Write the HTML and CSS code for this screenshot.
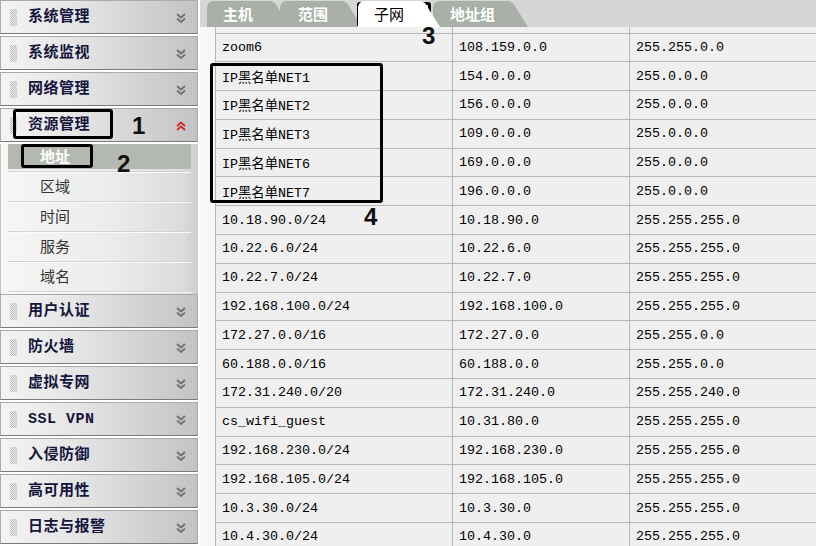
FILE: index.html
```html
<!DOCTYPE html>
<html lang="zh-CN">
<head>
<meta charset="utf-8">
<title>资源管理 - 子网</title>
<link rel="stylesheet" href="styles.css">
</head>
<body>
<div class="page">
  <aside class="side">
    <div class="hd"><span class="grip"></span><span class="hd-t">系统管理</span><svg class="chev" viewBox="0 0 10 10"><polyline points="1,1 5,4.5 9,1"/><polyline points="1,5.5 5,9 9,5.5"/></svg></div>
    <div class="hd"><span class="grip"></span><span class="hd-t">系统监视</span><svg class="chev" viewBox="0 0 10 10"><polyline points="1,1 5,4.5 9,1"/><polyline points="1,5.5 5,9 9,5.5"/></svg></div>
    <div class="hd"><span class="grip"></span><span class="hd-t">网络管理</span><svg class="chev" viewBox="0 0 10 10"><polyline points="1,1 5,4.5 9,1"/><polyline points="1,5.5 5,9 9,5.5"/></svg></div>
    <div class="hd"><span class="grip"></span><span class="hd-t">资源管理</span><svg class="chev up" viewBox="0 0 10 10"><polyline points="1,5 5,1.5 9,5"/><polyline points="1,9 5,5.5 9,9"/></svg></div>
    <ul class="sub">
      <li class="on"><span class="it">地址</span></li>
      <li><span class="it">区域</span></li>
      <li><span class="it">时间</span></li>
      <li><span class="it">服务</span></li>
      <li><span class="it">域名</span></li>
    </ul>
    <div class="hd"><span class="grip"></span><span class="hd-t">用户认证</span><svg class="chev" viewBox="0 0 10 10"><polyline points="1,1 5,4.5 9,1"/><polyline points="1,5.5 5,9 9,5.5"/></svg></div>
    <div class="hd"><span class="grip"></span><span class="hd-t">防火墙</span><svg class="chev" viewBox="0 0 10 10"><polyline points="1,1 5,4.5 9,1"/><polyline points="1,5.5 5,9 9,5.5"/></svg></div>
    <div class="hd"><span class="grip"></span><span class="hd-t">虚拟专网</span><svg class="chev" viewBox="0 0 10 10"><polyline points="1,1 5,4.5 9,1"/><polyline points="1,5.5 5,9 9,5.5"/></svg></div>
    <div class="hd"><span class="grip"></span><span class="hd-t">SSL VPN</span><svg class="chev" viewBox="0 0 10 10"><polyline points="1,1 5,4.5 9,1"/><polyline points="1,5.5 5,9 9,5.5"/></svg></div>
    <div class="hd"><span class="grip"></span><span class="hd-t">入侵防御</span><svg class="chev" viewBox="0 0 10 10"><polyline points="1,1 5,4.5 9,1"/><polyline points="1,5.5 5,9 9,5.5"/></svg></div>
    <div class="hd"><span class="grip"></span><span class="hd-t">高可用性</span><svg class="chev" viewBox="0 0 10 10"><polyline points="1,1 5,4.5 9,1"/><polyline points="1,5.5 5,9 9,5.5"/></svg></div>
    <div class="hd"><span class="grip"></span><span class="hd-t">日志与报警</span><svg class="chev" viewBox="0 0 10 10"><polyline points="1,1 5,4.5 9,1"/><polyline points="1,5.5 5,9 9,5.5"/></svg></div>
  </aside>

  <main class="main">
    <div class="tabs">
      <div class="tab t1">主机</div>
      <div class="tab t2">范围</div>
      <div class="tab t3 active">子网</div>
      <div class="tab t4">地址组</div>
    </div>
    <div class="grid-wrap">
      <table class="grid">
        <colgroup><col class="c1"><col class="c2"><col class="c3"></colgroup>
        <tbody>
          <tr class="gap"><td></td><td></td><td></td></tr>
          <tr><td>zoom6</td><td>108.159.0.0</td><td>255.255.0.0</td></tr>
          <tr><td>IP黑名单NET1</td><td>154.0.0.0</td><td>255.0.0.0</td></tr>
          <tr><td>IP黑名单NET2</td><td>156.0.0.0</td><td>255.0.0.0</td></tr>
          <tr><td>IP黑名单NET3</td><td>109.0.0.0</td><td>255.0.0.0</td></tr>
          <tr><td>IP黑名单NET6</td><td>169.0.0.0</td><td>255.0.0.0</td></tr>
          <tr><td>IP黑名单NET7</td><td>196.0.0.0</td><td>255.0.0.0</td></tr>
          <tr><td>10.18.90.0/24</td><td>10.18.90.0</td><td>255.255.255.0</td></tr>
          <tr><td>10.22.6.0/24</td><td>10.22.6.0</td><td>255.255.255.0</td></tr>
          <tr><td>10.22.7.0/24</td><td>10.22.7.0</td><td>255.255.255.0</td></tr>
          <tr><td>192.168.100.0/24</td><td>192.168.100.0</td><td>255.255.255.0</td></tr>
          <tr><td>172.27.0.0/16</td><td>172.27.0.0</td><td>255.255.0.0</td></tr>
          <tr><td>60.188.0.0/16</td><td>60.188.0.0</td><td>255.255.0.0</td></tr>
          <tr><td>172.31.240.0/20</td><td>172.31.240.0</td><td>255.255.240.0</td></tr>
          <tr><td>cs_wifi_guest</td><td>10.31.80.0</td><td>255.255.255.0</td></tr>
          <tr><td>192.168.230.0/24</td><td>192.168.230.0</td><td>255.255.255.0</td></tr>
          <tr><td>192.168.105.0/24</td><td>192.168.105.0</td><td>255.255.255.0</td></tr>
          <tr><td>10.3.30.0/24</td><td>10.3.30.0</td><td>255.255.255.0</td></tr>
          <tr><td>10.4.30.0/24</td><td>10.4.30.0</td><td>255.255.255.0</td></tr>
        </tbody>
      </table>
    </div>
  </main>
</div>

<div class="notes">
  <div class="box b1"></div><span class="num n1">1</span>
  <div class="box b2"></div><span class="num n2">2</span>
  <div class="box b3"></div><span class="num n3">3</span>
  <div class="box b4"></div><span class="num n4">4</span>
</div>
</body>
</html>
```

FILE: styles.css
```css
* { box-sizing: border-box; }

html, body {
  margin: 0;
  height: 546px;
  overflow: hidden;
  background: #fff;
}

body {
  position: relative;
  font-family: "Noto Sans CJK SC", sans-serif;
}

.page {
  display: flex;
  height: 546px;
}

/* ---------- sidebar ---------- */
.side {
  width: 200px;
  flex: none;
  padding-right: 2px;
  background: #fff;
  display: flex;
  flex-direction: column;
}

.hd {
  flex: none;
  height: 34px;
  margin-bottom: 2px;
  display: flex;
  align-items: center;
  padding-left: 9px;
  padding-top: 1px;
  border: 1px solid #ababab;
  border-bottom-color: #7b7b7b;
  background: linear-gradient(to right, #f4f4f4 0%, #e4e4e4 40%, #c3c3c3 100%);
}

.grip {
  width: 7px;
  height: 17px;
  margin-right: 11px;
  background: repeating-conic-gradient(#b8b8b8 0 25%, transparent 0 50%) 0 0 / 2px 2px;
}

.hd-t {
  font: bold 15px/1 "Liberation Mono", "Noto Sans CJK SC", monospace;
  letter-spacing: 0.5px;
  color: #15153d;
}

.chev {
  margin-left: auto;
  margin-right: 11px;
  width: 10px;
  height: 10px;
  fill: none;
  stroke: #707070;
  stroke-width: 1.8;
}

.chev.up { stroke: #d42a2a; }

.sub {
  flex: none;
  list-style: none;
  margin: 0;
  padding: 0;
  height: 150px;
  border-left: 1px solid #c4c4c4;
  background: linear-gradient(to right, #f6f6f6 0%, #ececec 55%, #dcdcdc 92%, #cdcdcd 100%);
}

.sub li {
  height: 30px;
  padding: 0 7px 0 7px;
}

.sub .it {
  display: block;
  height: 28px;
  line-height: 24px;
  padding-left: 32px;
  font-size: 15px;
  color: #333;
  border-bottom: 1px solid #d2d2d2;
  box-shadow: 0 1px 0 #fbfbfb;
}

.sub li.on .it {
  background: linear-gradient(#b3b9b0, #b3b9b0) top / 100% 25px no-repeat;
  color: #fff;
  font-weight: bold;
}

/* ---------- main ---------- */
.main {
  flex: 1;
  min-width: 0;
  display: flex;
  flex-direction: column;
  background: #f7f7f7;
}

.tabs {
  flex: none;
  height: 27px;
  display: flex;
  align-items: flex-end;
  padding-left: 7px;
  background: #d6d6d6;
}

.tab {
  height: 26px;
  line-height: 25px;
  font-size: 15px;
  font-weight: bold;
  color: #fff;
  background: #a8b0a7;
  clip-path: polygon(0 100%, 0 6px, 1px 3px, 3px 1px, 6px 0, calc(100% - 19px) 0, calc(100% - 15px) 2px, 100% 100%);
}

.t1 { width: 83px; padding-left: 16px; }
.t2 { width: 82px; padding-left: 18px; margin-left: -10px; }
.t3 { width: 82px; padding-left: 16px; margin-left: -4px; }
.t4 { width: 95px; padding-left: 17px; margin-left: -7px; }

.tab.active {
  background: #fff;
  color: #000;
  font-weight: normal;
  z-index: 2;
}

.grid-wrap {
  flex: 1;
  overflow: hidden;
  padding-left: 15px;
}

.grid {
  border-collapse: collapse;
  table-layout: fixed;
  width: 664px;
}

.c1 { width: 237px; }
.c2 { width: 177px; }
.c3 { width: 250px; }

.grid tr { height: 28.8px; }

.grid td {
  border: 1px solid #b6b6b6;
  background: #efefef;
  padding: 0 0 0 6px;
  font: 13.33px "Liberation Mono", "Noto Sans CJK SC", monospace;
  color: #000;
  white-space: nowrap;
  overflow: hidden;
}

.grid tr.gap { height: 6px; }
.grid tr.gap td { border-top: 0; }

/* ---------- annotations ---------- */
.notes {
  position: absolute;
  left: 0;
  top: 0;
  width: 816px;
  height: 546px;
  pointer-events: none;
}

.box {
  position: absolute;
  border: 3px solid #000;
  border-radius: 3px;
}

.b1 { left: 13px; top: 109px; width: 100px; height: 30px; }
.b2 { left: 21px; top: 144px; width: 72px; height: 24px; }
.b3 { left: 357px; top: 2px; width: 74px; height: 25px; }
.b4 { left: 210px; top: 63px; width: 173px; height: 140px; border-width: 3.5px; }

.num {
  position: absolute;
  font: bold 24px/1 "Liberation Sans", Arial, sans-serif;
  color: #111;
}

.n1 { left: 132px; top: 114px; }
.n2 { left: 117px; top: 152px; }
.n3 { left: 422px; top: 24px; }
.n4 { left: 364px; top: 205px; }
```
